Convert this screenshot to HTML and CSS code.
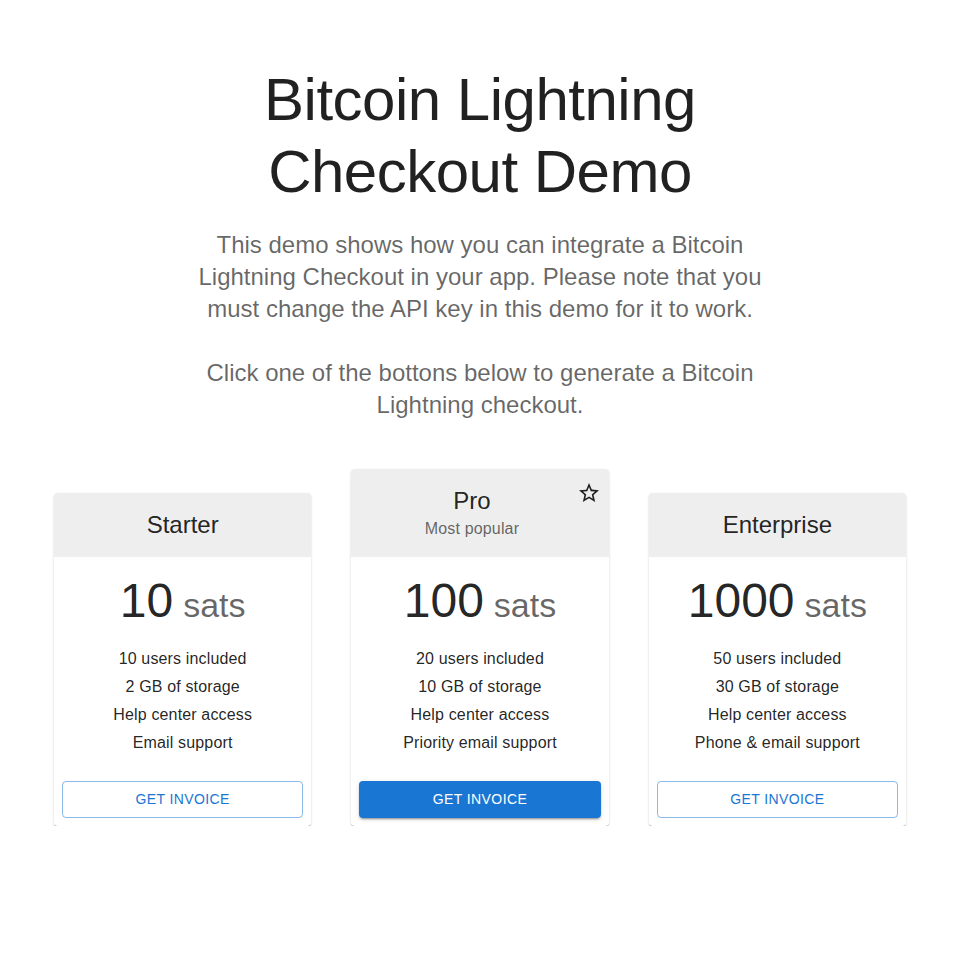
FILE: index.html
```html
<!DOCTYPE html>
<html lang="en">
<head>
  <meta charset="UTF-8">
  <meta name="viewport" content="width=device-width, initial-scale=1.0">
  <title>Bitcoin Lightning Checkout Demo</title>
  <link rel="stylesheet" href="styles.css">
</head>
<body>

  <!-- Hero -->
  <div class="hero">
    <h1 class="hero-title">Bitcoin Lightning Checkout Demo</h1>
    <p class="hero-text">
      This demo shows how you can integrate a Bitcoin Lightning Checkout in your app. Please note that you must change the API key in this demo for it to work.
      <br><br>
      Click one of the bottons below to generate a Bitcoin Lightning checkout.
    </p>
  </div>

  <!-- Pricing tiers -->
  <div class="tiers">
    <div class="card">
      <div class="card-header">
        <div class="card-heading">
          <h2 class="card-title">Starter</h2>
        </div>
      </div>
      <div class="card-content">
        <div class="price">
          <span class="price-amount">10</span>
          <span class="price-unit">sats</span>
        </div>
        <ul class="features">
          <li>10 users included</li>
          <li>2 GB of storage</li>
          <li>Help center access</li>
          <li>Email support</li>
        </ul>
      </div>
      <div class="card-actions">
        <button class="btn btn-outlined">Get invoice</button>
      </div>
    </div>

    <div class="card">
      <div class="card-header">
        <div class="card-heading">
          <h2 class="card-title">Pro</h2>
          <div class="card-subheader">Most popular</div>
        </div>
        <svg class="star" viewBox="0 0 24 24" width="24" height="24">
          <path d="M22 9.24l-7.19-.62L12 2 9.19 8.63 2 9.24l5.46 4.73L5.82 21 12 17.27 18.18 21l-1.63-7.03L22 9.24zM12 15.4l-3.76 2.27 1-4.28-3.32-2.88 4.38-.38L12 6.1l1.71 4.04 4.38.38-3.32 2.88 1 4.28L12 15.4z"/>
        </svg>
      </div>
      <div class="card-content">
        <div class="price">
          <span class="price-amount">100</span>
          <span class="price-unit">sats</span>
        </div>
        <ul class="features">
          <li>20 users included</li>
          <li>10 GB of storage</li>
          <li>Help center access</li>
          <li>Priority email support</li>
        </ul>
      </div>
      <div class="card-actions">
        <button class="btn btn-contained">Get invoice</button>
      </div>
    </div>

    <div class="card">
      <div class="card-header">
        <div class="card-heading">
          <h2 class="card-title">Enterprise</h2>
        </div>
      </div>
      <div class="card-content">
        <div class="price">
          <span class="price-amount">1000</span>
          <span class="price-unit">sats</span>
        </div>
        <ul class="features">
          <li>50 users included</li>
          <li>30 GB of storage</li>
          <li>Help center access</li>
          <li>Phone &amp; email support</li>
        </ul>
      </div>
      <div class="card-actions">
        <button class="btn btn-outlined">Get invoice</button>
      </div>
    </div>
  </div>

</body>
</html>
```

FILE: styles.css
```css
body {
  font-family: "Liberation Sans", Arial, sans-serif;
  color: rgba(0, 0, 0, 0.87);
  background: #fff;
  margin: 0;
}

/* Hero */
.hero {
  max-width: 600px;
  margin: 0 auto;
  padding: 64px 0 48px;
  text-align: center;
}
.hero-title {
  max-width: 552px;
  margin: 0 auto 21px;
  font-size: 60px;
  font-weight: 400;
  line-height: 72px;
  letter-spacing: -0.5px;
}
.hero-text {
  font-size: 24px;
  line-height: 32px;
  color: rgba(0, 0, 0, 0.6);
  margin: 0;
}

/* Pricing cards */
.tiers {
  max-width: 852px;
  margin: 0 auto;
  padding: 0 24px;
  display: grid;
  grid-template-columns: repeat(3, 1fr);
  gap: 40px;
  align-items: end;
}
.card {
  background: #fff;
  border-radius: 4px;
  overflow: hidden;
  box-shadow: 0 2px 1px -1px rgba(0, 0, 0, 0.2), 0 1px 1px 0 rgba(0, 0, 0, 0.14), 0 1px 3px 0 rgba(0, 0, 0, 0.12);
}
.card-header {
  display: flex;
  align-items: flex-start;
  background: #eeeeee;
  padding: 16px;
}
.card-heading {
  flex: 1;
  text-align: center;
}
.card-title {
  font-size: 24px;
  font-weight: 400;
  line-height: 32px;
  margin: 0;
}
.card-subheader {
  font-size: 16px;
  line-height: 24px;
  letter-spacing: 0.15px;
  color: rgba(0, 0, 0, 0.6);
}
.star {
  flex: none;
  margin: -4px -8px -4px 0;
  fill: rgba(0, 0, 0, 0.87);
}
.card-content {
  padding: 16px;
}
.price {
  display: flex;
  justify-content: center;
  align-items: baseline;
  gap: 10px;
  margin-bottom: 16px;
}
.price-amount {
  font-size: 48px;
  line-height: 56px;
}
.price-unit {
  font-size: 34px;
  line-height: 42px;
  color: rgba(0, 0, 0, 0.6);
}
.features {
  list-style: none;
  margin: 0;
  padding: 0;
  text-align: center;
}
.features li {
  font-size: 16px;
  line-height: 28px;
  letter-spacing: 0.15px;
}
.card-actions {
  padding: 8px;
}

/* Buttons */
.btn {
  display: block;
  width: 100%;
  box-sizing: border-box;
  font-family: inherit;
  font-size: 14px;
  line-height: 24.5px;
  letter-spacing: 0.4px;
  text-transform: uppercase;
  border-radius: 4px;
  cursor: pointer;
}
.btn-outlined {
  padding: 5px 15px;
  background: transparent;
  color: #1976d2;
  border: 1px solid rgba(25, 118, 210, 0.5);
}
.btn-contained {
  padding: 6px 16px;
  background: #1976d2;
  color: #fff;
  border: 0;
  box-shadow: 0 3px 1px -2px rgba(0, 0, 0, 0.2), 0 2px 2px 0 rgba(0, 0, 0, 0.14), 0 1px 5px 0 rgba(0, 0, 0, 0.12);
}
```
